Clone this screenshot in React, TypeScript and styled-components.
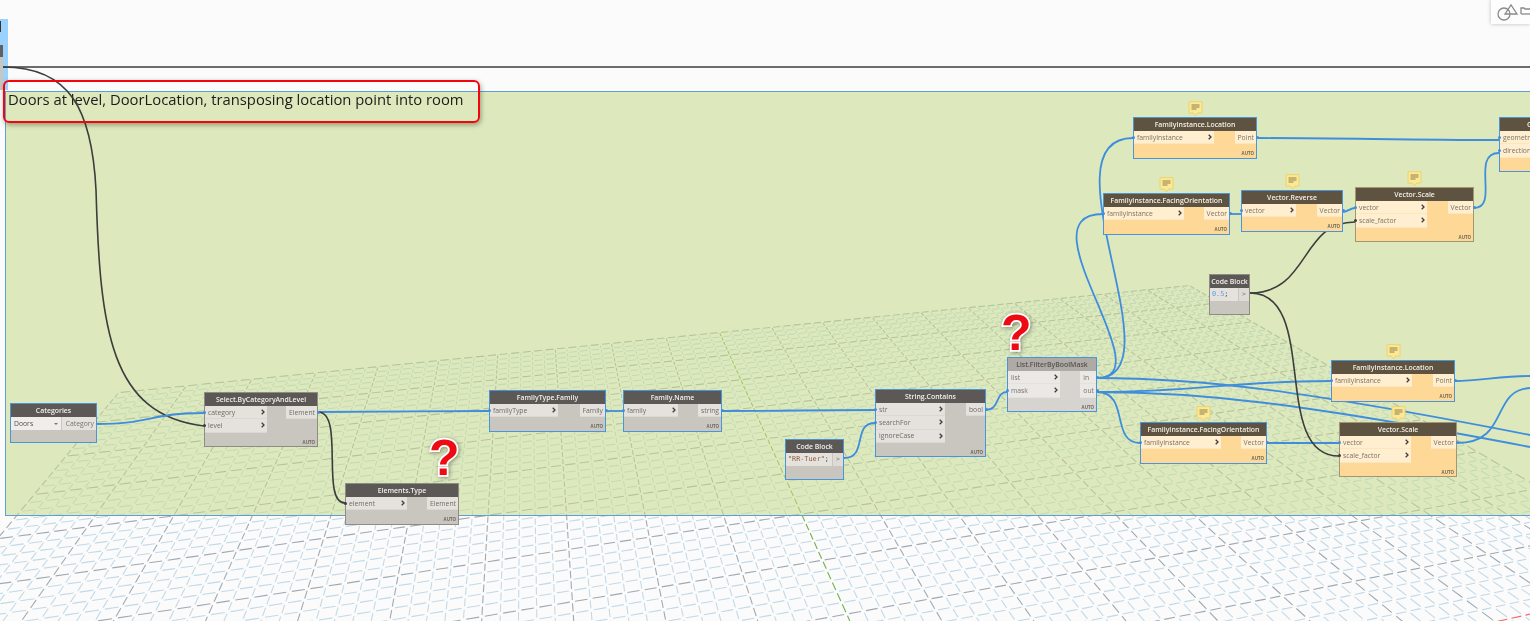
import React from 'react';
import styled, {createGlobalStyle} from 'styled-components';

const BLUE = '#3f8ede';
const DARK = '#3d3d3d';

const GlobalStyle = createGlobalStyle`
  html, body {
    margin: 0;
    padding: 0;
    background: #fbfbfb;
    overflow: hidden;
    font-family: "Open Sans", "Liberation Sans", sans-serif;
  }
`;

type Tone = 'plain' | 'orange' | 'frozen';
type Port = {label: string; dark?: boolean; idle?: boolean};
type NodeData = {
  title: string;
  x: number;
  y: number;
  w: number;
  inW?: number;
  tone?: Tone;
  selected?: boolean;
  note?: boolean;
  inputs?: Port[];
  outputs?: Port[];
  code?: React.ReactNode;
  dropdown?: string;
};

const palette = {
  plain: {head: '#5c5855', title: '#f2f0ee', body: '#c9c5bf', row: '#e5e2dd', text: '#6f6b66', edge: '#8f8b85'},
  orange: {head: '#5e5340', title: '#f6f0e4', body: '#fdd896', row: '#ffeecf', text: '#7d7362', edge: '#a39672'},
  frozen: {head: '#aeaaa5', title: '#57534f', body: '#d7d4d0', row: '#ebe9e6', text: '#77736e', edge: '#9a9690'},
};

/* background grid: two vanishing points measured off the screenshot */
type Pt = [number, number];
const VP_A: Pt = [525, -98];
const VP_B: Pt = [4446, -40];

const crossing = (a: Pt, b: Pt, c: Pt, d: Pt): Pt => {
  const den = (a[0] - b[0]) * (c[1] - d[1]) - (a[1] - b[1]) * (c[0] - d[0]);
  const p = a[0] * b[1] - a[1] * b[0];
  const q = c[0] * d[1] - c[1] * d[0];
  return [
    (p * (c[0] - d[0]) - (a[0] - b[0]) * q) / den,
    (p * (c[1] - d[1]) - (a[1] - b[1]) * q) / den,
  ];
};
const columnPoint = (k: number): Pt => [488 + 78.6 * k, 516];
const rowPoint = (n: number): Pt => [900, -92 + 1 / (0.00246 - 0.000128 * n)];
const gridPoint = (k: number, n: number): Pt =>
  crossing(VP_A, columnPoint(k), VP_B, rowPoint(n));

const CELL = 0.2;
const COLUMNS = 100;
const ROWS = 70;

// one dash per grid cell, so the dashes shrink with distance like in the 3D view
const gridPaths = (() => {
  const paths: Record<string, string[]> = {minor: [], major: [], green: [], red: []};
  const dash = (kind: string, a: Pt, b: Pt) => {
    if (Math.max(a[1], b[1]) < 0 || Math.min(a[1], b[1]) > 640) return;
    if (Math.max(a[0], b[0]) < -20 || Math.min(a[0], b[0]) > 1550) return;
    paths[kind].push(`M${a[0].toFixed(1)} ${a[1].toFixed(1)}L${b[0].toFixed(1)} ${b[1].toFixed(1)}`);
  };
  for (let i = 0; i <= COLUMNS; i++) {
    const k = -6 + i * CELL;
    const kind = i === 50 ? 'green' : i % 5 === 0 ? 'major' : 'minor';
    for (let j = 0; j < ROWS; j++) {
      const n = j * CELL;
      dash(kind, gridPoint(k, n + CELL * 0.15), gridPoint(k, n + CELL * 0.85));
    }
  }
  for (let j = 0; j <= ROWS; j++) {
    const n = j * CELL;
    const kind = j === 50 ? 'red' : j % 5 === 0 ? 'major' : 'minor';
    for (let i = 0; i < COLUMNS; i++) {
      const k = -6 + i * CELL;
      dash(kind, gridPoint(k + CELL * 0.15, n), gridPoint(k + CELL * 0.85, n));
    }
  }
  return paths;
})();

const gridStroke: Record<string, string> = {
  minor: '#c2d9e8',
  major: '#9fa9b2',
  green: '#74b04c',
  red: '#f2686c',
};

const wires: {d: string; dark?: boolean}[] = [
  {d: 'M3 67H1530', dark: true},
  {d: 'M3 67C70 67 92 110 96 190C100 330 110 415 204 426', dark: true},
  {d: 'M97 424C150 424 150 413 204 413'},
  {d: 'M318 412C400 412 420 411 489 411'},
  {d: 'M318 412C345 412 320 503 345 503', dark: true},
  {d: 'M606 411H623'},
  {d: 'M722 411C800 411 800 410 875 410'},
  {d: 'M844 458C868 458 852 423 875 423'},
  {d: 'M986 410C1000 410 995 392 1007 392'},
  {d: 'M1097 378C1180 378 1040 138 1133 138'},
  {d: 'M1097 378C1165 378 1020 214 1103 214'},
  {d: 'M1097 378C1200 378 1300 390 1530 435'},
  {d: 'M1097 392C1200 392 1300 403 1530 447'},
  {d: 'M1097 392C1200 392 1230 381 1331 381'},
  {d: 'M1097 392C1130 392 1110 443 1140 443'},
  {d: 'M1267 443H1339'},
  {d: 'M1257 138C1350 138 1400 140 1499 140'},
  {d: 'M1230 214H1241'},
  {d: 'M1342 212C1348 212 1350 208 1355 208'},
  {d: 'M1474 208C1500 208 1470 153 1499 153'},
  {d: 'M1250 293C1310 293 1300 222 1355 222', dark: true},
  {d: 'M1250 293C1320 293 1270 456 1339 456', dark: true},
  {d: 'M1455 381C1480 381 1500 376 1530 376'},
  {d: 'M1457 443C1510 443 1490 390 1530 388'},
];

const CodeString = styled.span`
  color: #8a5a3a;
`;
const CodeNumber = styled.span`
  color: #5d9be0;
`;
const CodeDark = styled.span`
  color: #444;
`;

const nodes: NodeData[] = [
  {title: 'Categories', x: 10, y: 403, w: 87, selected: true, dropdown: 'Doors', outputs: [{label: 'Category'}]},
  {title: 'Select.ByCategoryAndLevel', x: 204, y: 392, w: 114, inW: 62, inputs: [{label: 'category'}, {label: 'level', dark: true}], outputs: [{label: 'Element'}]},
  {title: 'Elements.Type', x: 345, y: 483, w: 114, inW: 61, inputs: [{label: 'element', dark: true}], outputs: [{label: 'Element', idle: true}]},
  {title: 'FamilyType.Family', x: 489, y: 390, w: 117, inW: 68, selected: true, inputs: [{label: 'familyType'}], outputs: [{label: 'Family'}]},
  {title: 'Family.Name', x: 623, y: 390, w: 99, inW: 54, selected: true, inputs: [{label: 'family'}], outputs: [{label: 'string'}]},
  {title: 'Code Block', x: 785, y: 439, w: 59, selected: true, code: <CodeString>"RR-Tuer"<CodeDark>;</CodeDark></CodeString>},
  {title: 'String.Contains', x: 875, y: 389, w: 111, inW: 69, selected: true, inputs: [{label: 'str'}, {label: 'searchFor'}, {label: 'ignoreCase', idle: true}], outputs: [{label: 'bool'}]},
  {title: 'List.FilterByBoolMask', x: 1007, y: 357, w: 90, inW: 52, tone: 'frozen', selected: true, inputs: [{label: 'list', idle: true}, {label: 'mask'}], outputs: [{label: 'in'}, {label: 'out'}]},
  {title: 'FamilyInstance.Location', x: 1133, y: 117, w: 124, inW: 80, tone: 'orange', selected: true, note: true, inputs: [{label: 'familyInstance'}], outputs: [{label: 'Point'}]},
  {title: 'FamilyInstance.FacingOrientation', x: 1103, y: 193, w: 127, inW: 80, tone: 'orange', selected: true, note: true, inputs: [{label: 'familyInstance'}], outputs: [{label: 'Vector'}]},
  {title: 'Vector.Reverse', x: 1241, y: 190, w: 102, inW: 54, tone: 'orange', selected: true, note: true, inputs: [{label: 'vector'}], outputs: [{label: 'Vector'}]},
  {title: 'Vector.Scale', x: 1355, y: 187, w: 119, inW: 71, tone: 'orange', note: true, inputs: [{label: 'vector'}, {label: 'scale_factor', dark: true}], outputs: [{label: 'Vector'}]},
  {title: 'Geometry.Translate', x: 1499, y: 117, w: 122, inW: 70, tone: 'orange', selected: true, inputs: [{label: 'geometry'}, {label: 'direction'}], outputs: [{label: 'Geometry'}]},
  {title: 'Code Block', x: 1209, y: 274, w: 41, code: <CodeNumber>0.5<CodeDark>;</CodeDark></CodeNumber>},
  {title: 'FamilyInstance.Location', x: 1331, y: 360, w: 124, inW: 80, tone: 'orange', selected: true, note: true, inputs: [{label: 'familyInstance'}], outputs: [{label: 'Point'}]},
  {title: 'FamilyInstance.FacingOrientation', x: 1140, y: 422, w: 127, inW: 80, tone: 'orange', selected: true, note: true, inputs: [{label: 'familyInstance'}], outputs: [{label: 'Vector'}]},
  {title: 'Vector.Scale', x: 1339, y: 422, w: 118, inW: 71, tone: 'orange', note: true, inputs: [{label: 'vector'}, {label: 'scale_factor', dark: true}], outputs: [{label: 'Vector'}]},
];

const Canvas = styled.div`
  position: relative;
  width: 1530px;
  height: 621px;
  overflow: hidden;
  background: #fbfbfb;
  filter: blur(0.35px);
`;

const Drawing = styled.svg`
  position: absolute;
  inset: 0;
  width: 1530px;
  height: 621px;
  fill: none;
`;

const Group = styled.section`
  position: absolute;
  left: 5px;
  top: 91px;
  width: 1540px;
  height: 425px;
  box-sizing: border-box;
  border: 1px solid #5f9fd6;
  background: rgba(197, 219, 139, 0.55);
  padding: 0 0 0 2px;
`;

const GroupTitle = styled.h2`
  margin: -2px 0 0;
  font-size: 14.8px;
  font-weight: 400;
  line-height: 18px;
  color: #1c1c1c;
`;

const Callout = styled.div`
  position: absolute;
  left: 3px;
  top: 80px;
  width: 477px;
  height: 43px;
  box-sizing: border-box;
  border: 2px solid #f4040c;
  border-radius: 6px;
  box-shadow: 1px 2px 5px rgba(60, 60, 40, 0.45);
`;

const Question = styled.span<{$x: number; $y: number}>`
  position: absolute;
  left: ${p => p.$x}px;
  top: ${p => p.$y}px;
  font-family: "Liberation Sans", sans-serif;
  font-weight: 700;
  font-size: 50px;
  line-height: 50px;
  color: #ee0a12;
  -webkit-text-stroke: 3.5px #fff;
  paint-order: stroke fill;
  filter: drop-shadow(1px 1px 2px rgba(0, 0, 0, 0.4));
`;

const Toolbar = styled.div`
  position: absolute;
  right: 0;
  top: -1px;
  width: 39px;
  height: 25px;
  background: #fdfdfd;
  box-shadow: 0 0 4px rgba(0, 0, 0, 0.25);
`;

const SideBar = styled.div`
  position: absolute;
  left: 0;
  top: 19px;
  width: 8px;
  height: 71px;
  background: #9ad2fd;
`;

const SideTick = styled.div`
  position: absolute;
  left: 0;
  top: 2px;
  width: 1px;
  height: 11px;
  background: #333;
`;

const SideNode = styled.div`
  position: absolute;
  left: 0;
  top: 26px;
  width: 3px;
  height: 45px;
  background: linear-gradient(#616161 0 12px, #c9c5bf 12px);
`;

const Box = styled.article<{$x: number; $y: number; $w: number; $tone: Tone; $selected?: boolean}>`
  position: absolute;
  left: ${p => p.$x}px;
  top: ${p => p.$y}px;
  width: ${p => p.$w}px;
  box-sizing: border-box;
  display: flex;
  flex-direction: column;
  background: ${p => palette[p.$tone].body};
  border: ${p => (p.$selected ? '1.6px solid #4a94dc' : `1px solid ${palette[p.$tone].edge}`)};
`;

const Header = styled.header<{$tone: Tone}>`
  height: 13px;
  flex: none;
  background: ${p => palette[p.$tone].head};
  color: ${p => palette[p.$tone].title};
  font-size: 6.9px;
  font-weight: 600;
  line-height: 13px;
  text-align: center;
  white-space: nowrap;
  overflow: hidden;
`;

const Ports = styled.div`
  display: flex;
  justify-content: space-between;
  align-items: flex-start;
`;

const PortColumn = styled.div<{$w?: number}>`
  display: flex;
  flex-direction: column;
  flex: none;
  width: ${p => (p.$w ? `${p.$w}px` : 'auto')};
`;

const PortRow = styled.div<{$tone: Tone}>`
  position: relative;
  height: 13.3px;
  box-sizing: border-box;
  display: flex;
  align-items: center;
  justify-content: space-between;
  gap: 2px;
  padding: 0 2px 0 3px;
  background: ${p => palette[p.$tone].row};
  border-bottom: 1px solid ${p => palette[p.$tone].body}55;
  color: ${p => palette[p.$tone].text};
  font-size: 6.8px;
  line-height: 13px;
  white-space: nowrap;
`;

const PortDot = styled.i<{$dark?: boolean; $out?: boolean}>`
  position: absolute;
  top: 4.5px;
  ${p => (p.$out ? 'right: -2.5px;' : 'left: -2.5px;')}
  width: 3px;
  height: 3px;
  border-radius: 50%;
  background: ${p => (p.$dark ? DARK : BLUE)};
`;

const Footer = styled.footer`
  height: 12px;
  flex: none;
  display: flex;
  align-items: flex-end;
  justify-content: flex-end;
  padding: 0 2px 1.5px 0;
  color: #6d675c;
  font-size: 4.4px;
  font-weight: 700;
  line-height: 5px;
`;

const CodeRow = styled.div`
  display: flex;
  height: 13px;
  gap: 1px;
`;

const CodeText = styled.div`
  flex: 1;
  background: #e5e2dd;
  padding-left: 2px;
  overflow: hidden;
  white-space: nowrap;
  font-family: "DejaVu Sans Mono", "Liberation Mono", monospace;
  font-size: 6.8px;
  line-height: 13px;
`;

const CodeOut = styled.div`
  width: 10px;
  flex: none;
  background: #dedbd6;
  color: #77736e;
  font-family: "DejaVu Sans Mono", monospace;
  font-size: 6.5px;
  line-height: 13px;
  text-align: center;
`;

const CodeFoot = styled.div`
  height: 12.5px;
`;

const DropdownRow = styled.div`
  display: flex;
  height: 13px;
  gap: 1px;
  font-size: 6.8px;
  line-height: 13px;
`;

const Dropdown = styled.div`
  flex: 1;
  background: #f0eeeb;
  color: #55514c;
  padding: 0 3px;
  display: flex;
  align-items: center;
  justify-content: space-between;
`;

const DropdownOut = styled.div`
  background: #e5e2dd;
  color: #77736e;
  padding: 0 2px 0 4px;
`;

const Caret = styled.i`
  width: 0;
  height: 0;
  border-left: 2px solid transparent;
  border-right: 2px solid transparent;
  border-top: 2.5px solid #777;
`;

const DropFoot = styled.div`
  height: 12px;
`;

const NoteMark = styled.svg`
  position: absolute;
  left: 50%;
  top: -17px;
  width: 15px;
  height: 16px;
  margin-left: -7.5px;
`;

const Chevron = () => (
  <svg width="4" height="6" viewBox="0 0 4 6" fill="none">
    <path d="M0.7 0.7L3 3L0.7 5.3" stroke="#3d3d3d" strokeWidth="1.3" />
  </svg>
);

const Note = () => (
  <NoteMark viewBox="0 0 15 16" fill="none">
    <path d="M1 .7H14V12H9.6L7.5 15L5.4 12H1Z" fill="#fbe995" stroke="#eed26e" />
    <path d="M3.5 4H11.5M3.5 6H11.5M3.5 8H8.5" stroke="#8f7f4e" strokeWidth="1" />
  </NoteMark>
);

const GraphNode: React.FC<{node: NodeData}> = ({node}) => {
  const tone = node.tone ?? 'plain';
  return (
    <Box $x={node.x} $y={node.y} $w={node.w} $tone={tone} $selected={node.selected}>
      {node.note && <Note />}
      <Header $tone={tone}>{node.title}</Header>
      {node.code ? (
        <>
          <CodeRow>
            <CodeText>{node.code}</CodeText>
            <CodeOut>&gt;</CodeOut>
          </CodeRow>
          <CodeFoot />
        </>
      ) : node.dropdown ? (
        <>
          <DropdownRow>
            <Dropdown>
              {node.dropdown}
              <Caret />
            </Dropdown>
            <DropdownOut>{node.outputs?.[0].label}</DropdownOut>
          </DropdownRow>
          <DropFoot />
        </>
      ) : (
        <>
          <Ports>
            <PortColumn $w={node.inW}>
              {node.inputs?.map(port => (
                <PortRow key={port.label} $tone={tone}>
                  {!port.idle && <PortDot $dark={port.dark} />}
                  {port.label}
                  <Chevron />
                </PortRow>
              ))}
            </PortColumn>
            <PortColumn>
              {node.outputs?.map(port => (
                <PortRow key={port.label} $tone={tone}>
                  {port.label}
                  {!port.idle && <PortDot $dark={port.dark} $out />}
                </PortRow>
              ))}
            </PortColumn>
          </Ports>
          <Footer>AUTO</Footer>
        </>
      )}
    </Box>
  );
};

export default function App() {
  return (
    <Canvas>
      <GlobalStyle />
      <Drawing viewBox="0 0 1530 621">
        {Object.keys(gridPaths).map(kind => (
          <path key={kind} d={gridPaths[kind].join('')} stroke={gridStroke[kind]} strokeWidth={1.1} />
        ))}
      </Drawing>
      <SideBar>
        <SideTick />
        <SideNode />
      </SideBar>
      <Group>
        <GroupTitle>Doors at level, DoorLocation, transposing location point into room</GroupTitle>
      </Group>
      <Drawing viewBox="0 0 1530 621">
        {wires.map((wire, i) => (
          <path key={i} d={wire.d} stroke={wire.dark ? DARK : BLUE} strokeWidth={wire.dark ? 1.6 : 1.8} />
        ))}
      </Drawing>
      {nodes.map(node => (
        <GraphNode key={`${node.title}-${node.x}`} node={node} />
      ))}
      <Callout />
      <Question $x={429} $y={433}>?</Question>
      <Question $x={1001} $y={308}>?</Question>
      <Toolbar>
        <svg width="39" height="25" viewBox="0 0 39 25" fill="none" stroke="#8a8a8a" strokeWidth="1.3">
          <circle cx="13" cy="15" r="6" />
          <path d="M14 15L20 6L26 15Z" />
          <path d="M30 15V9H33L34 10H39" />
          <path d="M30 15H39" />
        </svg>
      </Toolbar>
    </Canvas>
  );
}
